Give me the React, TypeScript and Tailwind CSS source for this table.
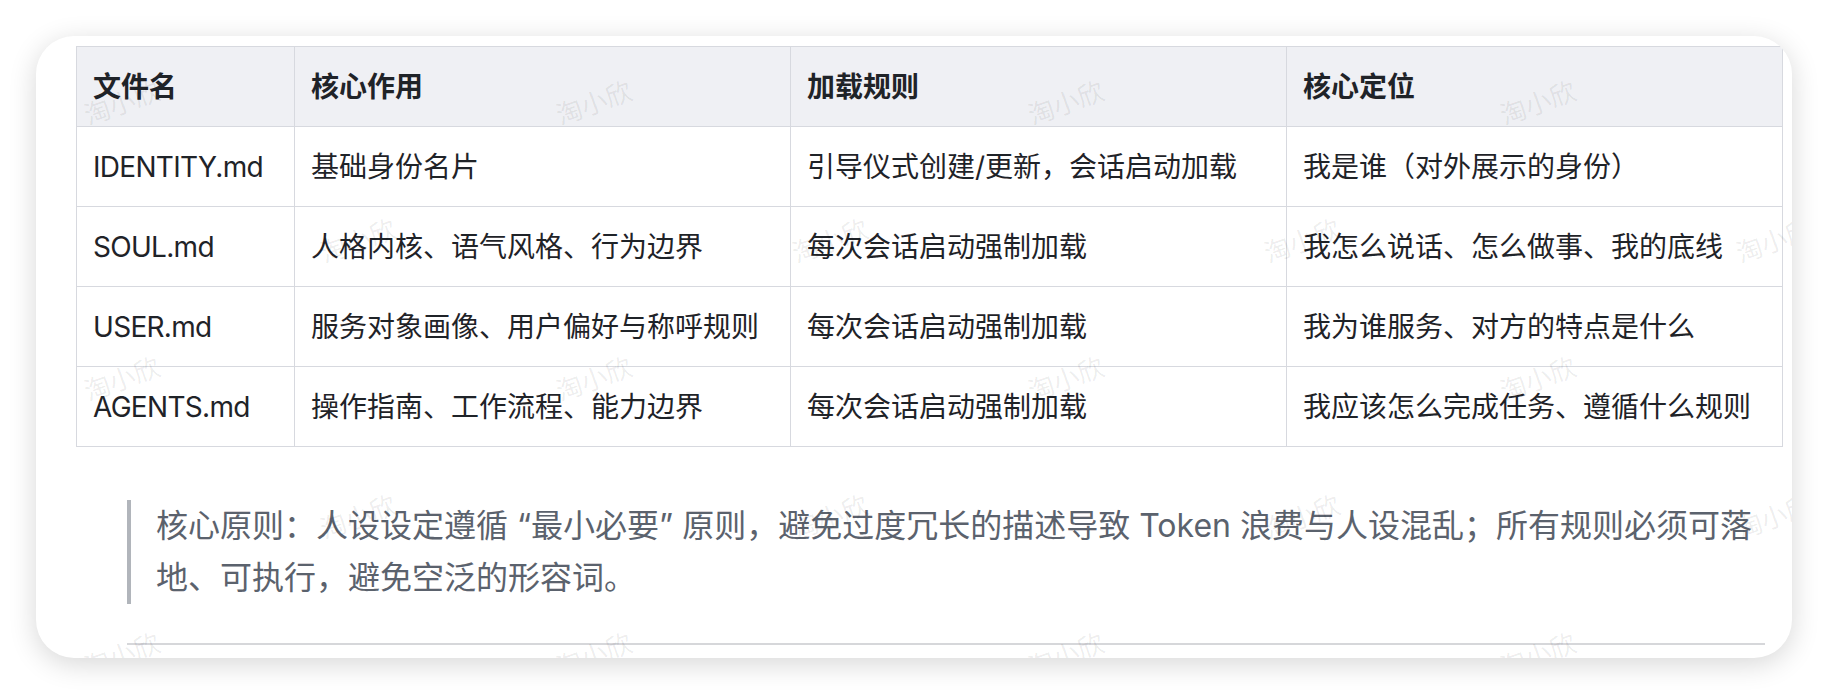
import React from 'react'

const rows = [
  { file: 'IDENTITY.md', role: '基础身份名片',                   load: '引导仪式创建/更新，会话启动加载', pos: '我是谁（对外展示的身份）' },
  { file: 'SOUL.md',     role: '人格内核、语气风格、行为边界',     load: '每次会话启动强制加载',           pos: '我怎么说话、怎么做事、我的底线' },
  { file: 'USER.md',     role: '服务对象画像、用户偏好与称呼规则', load: '每次会话启动强制加载',           pos: '我为谁服务、对方的特点是什么' },
  { file: 'AGENTS.md',   role: '操作指南、工作流程、能力边界',     load: '每次会话启动强制加载',           pos: '我应该怎么完成任务、遵循什么规则' },
]

// watermark grid, staggered every other row (card-relative centres)
const marks: { x: number; y: number }[] = []
for (let r = 0; r < 5; r++) {
  for (let c = 0; c < 5; c++) {
    marks.push({ x: (r % 2 === 0 ? 86 : 322) + c * 472, y: 67 + r * 138 })
  }
}

export default function App() {
  return (
    <div className="w-[1828px] h-[694px] bg-white p-[36px] font-['Inter','Noto_Sans_CJK_SC',sans-serif]">
      <div className="relative w-[1756px] h-[622px] bg-white rounded-[38px] overflow-hidden shadow-[0_6px_28px_rgba(0,0,0,0.16)] pt-[10px] pl-[40px]">
        <table className="table-fixed border-collapse w-[1706px] text-[28px] text-[#1f2328]">
          <colgroup>
            <col className="w-[218px]" />
            <col className="w-[496px]" />
            <col className="w-[496px]" />
            <col className="w-[496px]" />
          </colgroup>
          <thead>
            <tr className="h-[80px] bg-[#eff0f4]">
              {['文件名', '核心作用', '加载规则', '核心定位'].map(h => (
                <th key={h} className="border border-[#d7d9df] px-4 text-left font-semibold">{h}</th>
              ))}
            </tr>
          </thead>
          <tbody>
            {rows.map(r => (
              <tr key={r.file} className="h-[80px]">
                <td className="border border-[#d7d9df] px-4 whitespace-nowrap tracking-[-0.7px]">{r.file}</td>
                <td className="border border-[#d7d9df] px-4 whitespace-nowrap">{r.role}</td>
                <td className="border border-[#d7d9df] px-4 whitespace-nowrap">{r.load}</td>
                <td className="border border-[#d7d9df] px-4 whitespace-nowrap">{r.pos}</td>
              </tr>
            ))}
          </tbody>
        </table>

        <div className="ml-[51px] mt-[53px] w-[1640px]">
          <blockquote className="border-l-4 border-[#b1b5bb] pl-[25px] text-[32px] leading-[52px] text-[#5b626d] whitespace-nowrap">
            核心原则：人设设定遵循 “最小必要” 原则，避免过度冗长的描述导致 Token 浪费与人设混乱；所有规则必须可落<br />
            地、可执行，避免空泛的形容词。
          </blockquote>
          <div className="mt-[39px] h-[2px] w-[1638px] bg-[#d6d7da]" />
        </div>

        <div className="pointer-events-none absolute inset-0">
          {marks.map((m, i) => (
            <span
              key={i}
              className="absolute -translate-x-1/2 -translate-y-1/2 -rotate-[20deg] whitespace-nowrap text-[26px] text-[rgba(0,0,0,0.08)]"
              style={{ left: m.x, top: m.y }}
            >
              淘小欣
            </span>
          ))}
        </div>
      </div>
    </div>
  )
}
